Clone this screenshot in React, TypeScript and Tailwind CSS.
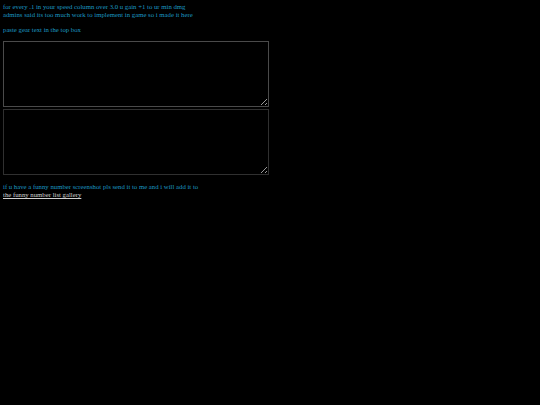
import React from "react";

export default function App() {
  return (
    <div className="min-h-[405px] w-[540px] bg-black p-[3px] text-[6.75px] leading-[7.6px] text-[#1b98c2]" style={{ fontFamily: '"Liberation Serif", "Times New Roman", serif' }}>
      <div>for every .1 in your speed column over 3.0 u gain +1 to ur min dmg</div>
      <div>admins said its too much work to implement in game so i made it here</div>
      <div className="h-[7.6px]" />
      <div>paste gear text in the top box</div>
      <div className="mt-[8px] flex flex-col gap-[2px]">
        <textarea className="block h-[66px] w-[266px] border border-[#4a4a4a] bg-black text-[#ccc] outline-none" />
        <textarea className="block h-[66px] w-[266px] border border-[#303030] bg-black text-[#ccc] outline-none" />
      </div>
      <div className="mt-[8px]">if u have a funny number screenshot pls send it to me and i will add it to</div>
      <a href="#" className="text-[#d0d0d0] underline">the funny number list gallery</a>
    </div>
  );
}
